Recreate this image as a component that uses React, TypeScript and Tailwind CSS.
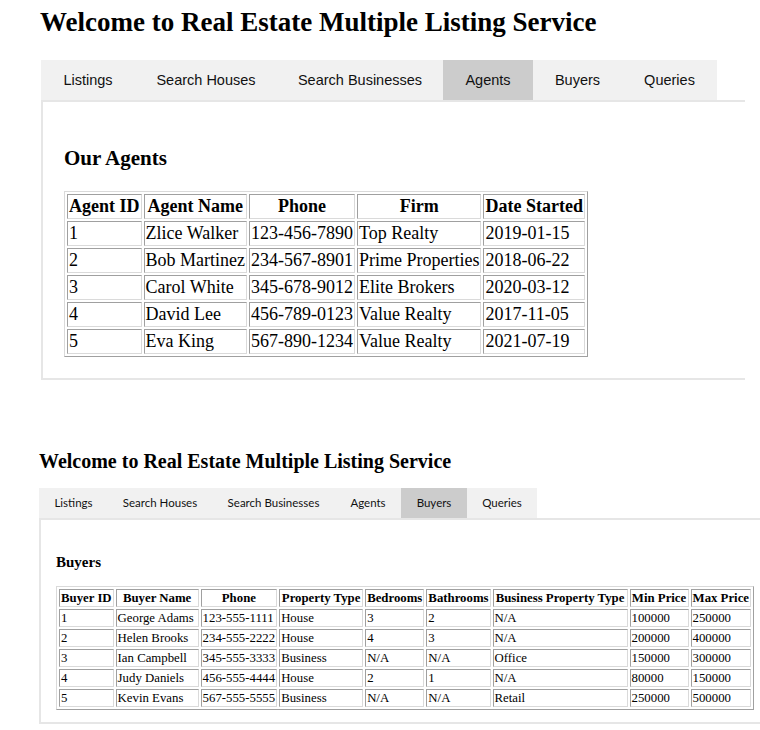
import React from 'react';

const agents = [
  ['1', 'Zlice Walker', '123-456-7890', 'Top Realty', '2019-01-15'],
  ['2', 'Bob Martinez', '234-567-8901', 'Prime Properties', '2018-06-22'],
  ['3', 'Carol White', '345-678-9012', 'Elite Brokers', '2020-03-12'],
  ['4', 'David Lee', '456-789-0123', 'Value Realty', '2017-11-05'],
  ['5', 'Eva King', '567-890-1234', 'Value Realty', '2021-07-19'],
];

const buyers = [
  ['1', 'George Adams', '123-555-1111', 'House', '3', '2', 'N/A', '100000', '250000'],
  ['2', 'Helen Brooks', '234-555-2222', 'House', '4', '3', 'N/A', '200000', '400000'],
  ['3', 'Ian Campbell', '345-555-3333', 'Business', 'N/A', 'N/A', 'Office', '150000', '300000'],
  ['4', 'Judy Daniels', '456-555-4444', 'House', '2', '1', 'N/A', '80000', '150000'],
  ['5', 'Kevin Evans', '567-555-5555', 'Business', 'N/A', 'N/A', 'Retail', '250000', '500000'],
];

const cellBorder = 'border border-t-[#a0a0a0] border-l-[#a0a0a0] border-b-[#dadada] border-r-[#dadada]';
const tableBorder = 'border border-t-[#dadada] border-l-[#dadada] border-b-[#a0a0a0] border-r-[#a0a0a0]';

function TopTabs () {
  const tabs = [
    { label: 'Listings', w: 'w-[94px]' },
    { label: 'Search Houses', w: 'w-[142px]' },
    { label: 'Search Businesses', w: 'w-[166px]' },
    { label: 'Agents', w: 'w-[90px]', active: true },
    { label: 'Buyers', w: 'w-[89px]' },
    { label: 'Queries', w: 'w-[95px]' },
  ];
  return (
    <div className="flex h-[40px] ml-[1px] mt-[22px]">
      {tabs.map((t) => (
        <div
          key={t.label}
          className={`${t.w} flex items-center justify-center pt-[2px] text-[14.5px] text-[#111] ${t.active ? 'bg-[#cccccc]' : 'bg-[#f1f1f1]'}`}
          style={{ fontFamily: '"Liberation Sans", Arial, sans-serif' }}
        >
          {t.label}
        </div>
      ))}
    </div>
  );
}

function BottomTabs () {
  const tabs = [
    { label: 'Listings', w: 'w-[69px]' },
    { label: 'Search Houses', w: 'w-[104px]' },
    { label: 'Search Businesses', w: 'w-[123px]' },
    { label: 'Agents', w: 'w-[66px]' },
    { label: 'Buyers', w: 'w-[66px]', active: true },
    { label: 'Queries', w: 'w-[70px]' },
  ];
  return (
    <div className="flex h-[30px] mt-[15px]">
      {tabs.map((t) => (
        <div
          key={t.label}
          className={`${t.w} flex items-center justify-center text-[11.5px] text-[#111] ${t.active ? 'bg-[#cccccc]' : 'bg-[#f1f1f1]'}`}
          style={{ fontFamily: 'Lato, "Liberation Sans", sans-serif' }}
        >
          {t.label}
        </div>
      ))}
    </div>
  );
}

export default function App () {
  const agentCols = ['w-[74px]', 'w-[103px]', 'w-[105px]', 'w-[121px]', 'w-[100px]'];
  const agentHead = ['Agent ID', 'Agent Name', 'Phone', 'Firm', 'Date Started'];
  const buyerCols = ['w-[54px]', 'w-[83px]', 'w-[76px]', 'w-[84px]', 'w-[58px]', 'w-[64px]', 'w-[135px]', 'w-[59px]', 'w-[60px]'];
  const buyerHead = ['Buyer ID', 'Buyer Name', 'Phone', 'Property Type', 'Bedrooms', 'Bathrooms', 'Business Property Type', 'Min Price', 'Max Price'];

  return (
    <div className="w-[760px] h-[730px] bg-white overflow-hidden text-black" style={{ fontFamily: '"Liberation Serif", "Times New Roman", serif' }}>
      {/* first screenshot: agents */}
      <div className="pl-[40px]">
        <h1 className="pt-[7px] text-[27px] leading-[31px] font-bold">Welcome to Real Estate Multiple Listing Service</h1>
        <TopTabs />
        <div className="ml-[1px] w-[704px] h-[280px] border-t-2 border-l-2 border-b-2 border-[#e6e6e6] pl-[21px] pt-[44px]">
          <h2 className="text-[21px] leading-[25px] font-bold">Our Agents</h2>
          <table className={`mt-[20px] border-separate border-spacing-[2px] ${tableBorder}`}>
            <thead>
              <tr>
                {agentHead.map((h, i) => (
                  <th key={h} className={`${agentCols[i]} ${cellBorder} p-[1px] text-[18px] leading-[21px] font-bold text-center whitespace-nowrap`}>{h}</th>
                ))}
              </tr>
            </thead>
            <tbody>
              {agents.map((r) => (
                <tr key={r[0]}>
                  {r.map((c, i) => (
                    <td key={i} className={`${cellBorder} p-[1px] text-[18px] leading-[21px] whitespace-nowrap`}>{c}</td>
                  ))}
                </tr>
              ))}
            </tbody>
          </table>
        </div>
      </div>

      {/* second screenshot: buyers */}
      <div className="pl-[39px] pt-[70px]">
        <h1 className="text-[20px] leading-[23px] font-bold">Welcome to Real Estate Multiple Listing Service</h1>
        <BottomTabs />
        <div className="w-[721px] h-[206px] border-t-2 border-l-2 border-b-2 border-[#e6e6e6] pl-[15px] pt-[33px]">
          <h2 className="text-[15px] leading-[18px] font-bold">Buyers</h2>
          <table className={`mt-[15px] border-separate border-spacing-[2px] ${tableBorder}`}>
            <thead>
              <tr>
                {buyerHead.map((h, i) => (
                  <th key={h} className={`${buyerCols[i]} ${cellBorder} p-[1px] text-[12.8px] leading-[14px] font-bold text-center whitespace-nowrap`}>{h}</th>
                ))}
              </tr>
            </thead>
            <tbody>
              {buyers.map((r) => (
                <tr key={r[0]}>
                  {r.map((c, i) => (
                    <td key={i} className={`${cellBorder} p-[1px] text-[12.8px] leading-[14px] whitespace-nowrap`}>{c}</td>
                  ))}
                </tr>
              ))}
            </tbody>
          </table>
        </div>
      </div>
    </div>
  );
}
